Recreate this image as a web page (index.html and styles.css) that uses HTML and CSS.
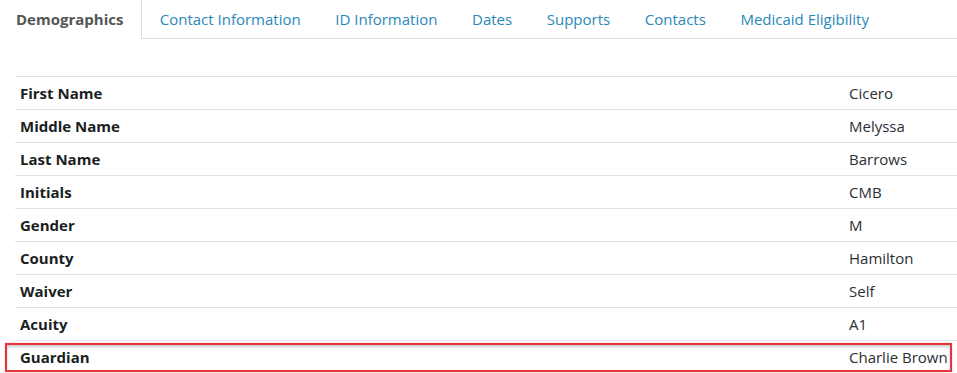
FILE: index.html
```html
<!DOCTYPE html>
<html lang="en">
<head>
  <meta charset="UTF-8">
  <title>Member Details - Demographics</title>
  <link rel="stylesheet" href="styles.css">
</head>
<body>
  <ul class="tabs">
    <li class="tab active">Demographics</li>
    <li class="tab">Contact Information</li>
    <li class="tab">ID Information</li>
    <li class="tab">Dates</li>
    <li class="tab">Supports</li>
    <li class="tab">Contacts</li>
    <li class="tab">Medicaid Eligibility</li>
  </ul>

  <div class="panel">
    <table class="details">
      <tr><th>First Name</th><td>Cicero</td></tr>
      <tr><th>Middle Name</th><td>Melyssa</td></tr>
      <tr><th>Last Name</th><td>Barrows</td></tr>
      <tr><th>Initials</th><td>CMB</td></tr>
      <tr><th>Gender</th><td>M</td></tr>
      <tr><th>County</th><td>Hamilton</td></tr>
      <tr><th>Waiver</th><td>Self</td></tr>
      <tr><th>Acuity</th><td>A1</td></tr>
      <tr class="highlight"><th>Guardian</th><td>Charlie Brown</td></tr>
    </table>
  </div>
</body>
</html>
```

FILE: styles.css
```css
body {
  font-family: 'Open Sans', 'Noto Sans', Arial, sans-serif;
  font-size: 15px;
  color: #333;
  background: #fff;
  margin: 0;
  overflow: hidden;
}
.tabs {
  display: flex;
  list-style: none;
  margin: 0;
  padding: 0;
  height: 39px;
  border-bottom: 1px solid #ddd;
  box-sizing: border-box;
}
.tab {
  padding: 0 17.3px;
  line-height: 39px;
  color: #2a88b9;
  white-space: nowrap;
}
.tab.active {
  font-weight: bold;
  color: #555;
  background: #fff;
  height: 39px;
  padding-left: 16px;
  padding-right: 18px;
  border-right: 1px solid #ddd;
}
.panel {
  padding: 37px 0 0 15px;
}
.details {
  width: 942px;
  border-collapse: collapse;
  border-top: 1px solid #dee2e6;
}
.details th,
.details td {
  height: 32px;
  padding: 0 5px;
  border-bottom: 1px solid #dee2e6;
  text-align: left;
  color: #1b1e21;
}
.details th {
  font-weight: bold;
}
.details td {
  width: 103px;
  color: #2b2f33;
}
.highlight th {
  position: relative;
  border-bottom: none;
}
.highlight td {
  border-bottom: none;
}
.highlight th::after {
  content: "";
  position: absolute;
  left: -10px;
  top: 2px;
  width: 943px;
  height: 25px;
  border: 2px solid #e5353c;
  box-shadow: inset 0 2px 3px rgba(0,0,0,0.2), 0 0 1px rgba(229,53,60,0.6);
}
```
